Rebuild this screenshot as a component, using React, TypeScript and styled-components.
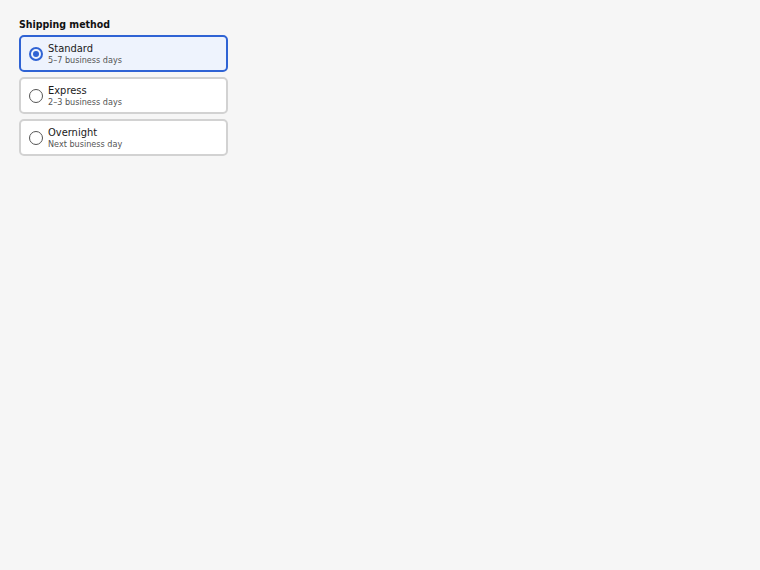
import { useState } from 'react'
import styled, { createGlobalStyle } from 'styled-components'

const GlobalStyle = createGlobalStyle`
  html, body {
    margin: 0;
    background: #f6f6f6;
    font-family: "DejaVu Sans Condensed", "DejaVu Sans", sans-serif;
    color: #1a1a1a;
  }
`

const Page = styled.div`
  padding: 18px 19px;
`

const Group = styled.fieldset`
  border: 0;
  margin: 0;
  padding: 0;
  width: 209px;
  display: flex;
  flex-direction: column;
  gap: 5px;
`

const Legend = styled.legend`
  padding: 0;
  margin-bottom: 4px;
  font-size: 10.5px;
  line-height: 13px;
  font-weight: bold;
  color: #111;
`

const Option = styled.label<{ $checked: boolean }>`
  display: flex;
  align-items: center;
  gap: 5px;
  height: 37px;
  box-sizing: border-box;
  padding: 0 8px;
  border: ${(p) => (p.$checked ? '2px solid #2f63d4' : '2px solid #d2d2d2')};
  border-radius: 5px;
  background: ${(p) => (p.$checked ? '#eef3fd' : '#ffffff')};
  cursor: pointer;
`

const Radio = styled.span<{ $checked: boolean }>`
  width: 14px;
  height: 14px;
  box-sizing: border-box;
  border-radius: 50%;
  border: ${(p) => (p.$checked ? '2px solid #2f63d4' : '1.5px solid #555')};
  display: flex;
  align-items: center;
  justify-content: center;
  flex-shrink: 0;

  &::after {
    content: '';
    width: 6px;
    height: 6px;
    border-radius: 50%;
    background: #2f63d4;
    display: ${(p) => (p.$checked ? 'block' : 'none')};
  }
`

const Hidden = styled.input`
  position: absolute;
  opacity: 0;
  pointer-events: none;
`

const Text = styled.span`
  display: flex;
  flex-direction: column;
`

const Title = styled.span`
  font-size: 11px;
  line-height: 13px;
  color: #1a1a1a;
`

const Sub = styled.span`
  font-size: 9px;
  line-height: 11px;
  color: #555;
`

const options = [
  { id: 'standard', title: 'Standard', sub: '5–7 business days' },
  { id: 'express', title: 'Express', sub: '2–3 business days' },
  { id: 'overnight', title: 'Overnight', sub: 'Next business day' },
]

export default function App() {
  const [value, setValue] = useState('standard')
  return (
    <Page>
      <GlobalStyle />
      <Group>
        <Legend>Shipping method</Legend>
        {options.map((o) => {
          const checked = value === o.id
          return (
            <Option key={o.id} $checked={checked}>
              <Hidden
                type="radio"
                name="shipping"
                checked={checked}
                onChange={() => setValue(o.id)}
              />
              <Radio $checked={checked} />
              <Text>
                <Title>{o.title}</Title>
                <Sub>{o.sub}</Sub>
              </Text>
            </Option>
          )
        })}
      </Group>
    </Page>
  )
}
